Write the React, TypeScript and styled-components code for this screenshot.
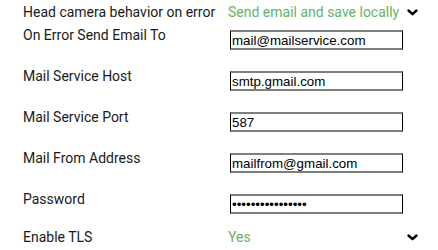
import React from "react";
import styled, { createGlobalStyle } from "styled-components";

const GlobalStyle = createGlobalStyle`
  html, body {
    margin: 0;
    padding: 0;
    background: #ffffff;
  }
  body {
    font-family: Roboto, "Noto Sans", sans-serif;
    font-size: 14px;
    color: #1a1a1a;
  }
`;

const Page = styled.div`
  width: 438px;
  height: 250px;
  padding-left: 23px;
  box-sizing: border-box;
  display: flex;
  flex-direction: column;
  overflow: hidden;
`;

const SelectRow = styled.div`
  display: grid;
  grid-template-columns: 205px 190px;
  align-items: start;
  padding-top: 4px;
  height: 16px;
`;

const RowLabel = styled.div<{ $tight?: boolean }>`
  font-family: Roboto, "Noto Sans", sans-serif;
  font-size: 14px;
  line-height: ${(p) => (p.$tight ? "10px" : "16px")};
  color: #1a1a1a;
  white-space: nowrap;
`;

const Select = styled.div`
  display: flex;
  align-items: center;
  justify-content: space-between;
  height: 16px;
  padding-right: 0;
`;

const SelectValue = styled.span`
  font-family: Roboto, "Noto Sans", sans-serif;
  font-size: 14px;
  line-height: 16px;
  color: #63b466;
  white-space: nowrap;
`;

const Chevron = styled.svg`
  width: 11px;
  height: 7px;
  flex: none;
  margin-top: 0px;
`;

const FieldGroup = styled.div`
  display: flex;
  flex-direction: column;
  gap: 21px;
  margin: 10px 0 11px;
`;

const InputRow = styled.div`
  display: grid;
  grid-template-columns: 207px 173px;
  align-items: start;
  height: 20px;
`;

const TextInput = styled.input`
  box-sizing: border-box;
  width: 173px;
  height: 20px;
  margin: 0;
  padding: 0 1px;
  border-style: solid;
  border-width: 2px 1px;
  border-color: #7f7f7f #000000;
  border-radius: 0;
  outline: none;
  background: #ffffff;
  font-family: "Liberation Sans", Arial, sans-serif;
  font-size: 13.33px;
  color: #000000;
`;

const ChevronIcon = () => (
  <Chevron viewBox="0 0 11 7">
    <polyline
      points="1.5,1.5 5.5,5.2 9.5,1.5"
      fill="none"
      stroke="#000"
      strokeWidth="2.4"
      strokeLinecap="round"
      strokeLinejoin="round"
    />
  </Chevron>
);

const fields: { label: string; value: string; type?: string }[] = [
  { label: "On Error Send Email To", value: "mail@mailservice.com" },
  { label: "Mail Service Host", value: "smtp.gmail.com" },
  { label: "Mail Service Port", value: "587" },
  { label: "Mail From Address", value: "mailfrom@gmail.com" },
  { label: "Password", value: "abcdefghijklmnop", type: "password" },
];

export default function App() {
  return (
    <>
      <GlobalStyle />
      <Page>
        <SelectRow>
          <RowLabel>Head camera behavior on error</RowLabel>
          <Select>
            <SelectValue>Send email and save locally</SelectValue>
            <ChevronIcon />
          </Select>
        </SelectRow>
        <FieldGroup>
          {fields.map((f) => (
            <InputRow key={f.label}>
              <RowLabel $tight>{f.label}</RowLabel>
              <TextInput type={f.type ?? "text"} value={f.value} readOnly />
            </InputRow>
          ))}
        </FieldGroup>
        <SelectRow>
          <RowLabel>Enable TLS</RowLabel>
          <Select>
            <SelectValue>Yes</SelectValue>
            <ChevronIcon />
          </Select>
        </SelectRow>
      </Page>
    </>
  );
}
